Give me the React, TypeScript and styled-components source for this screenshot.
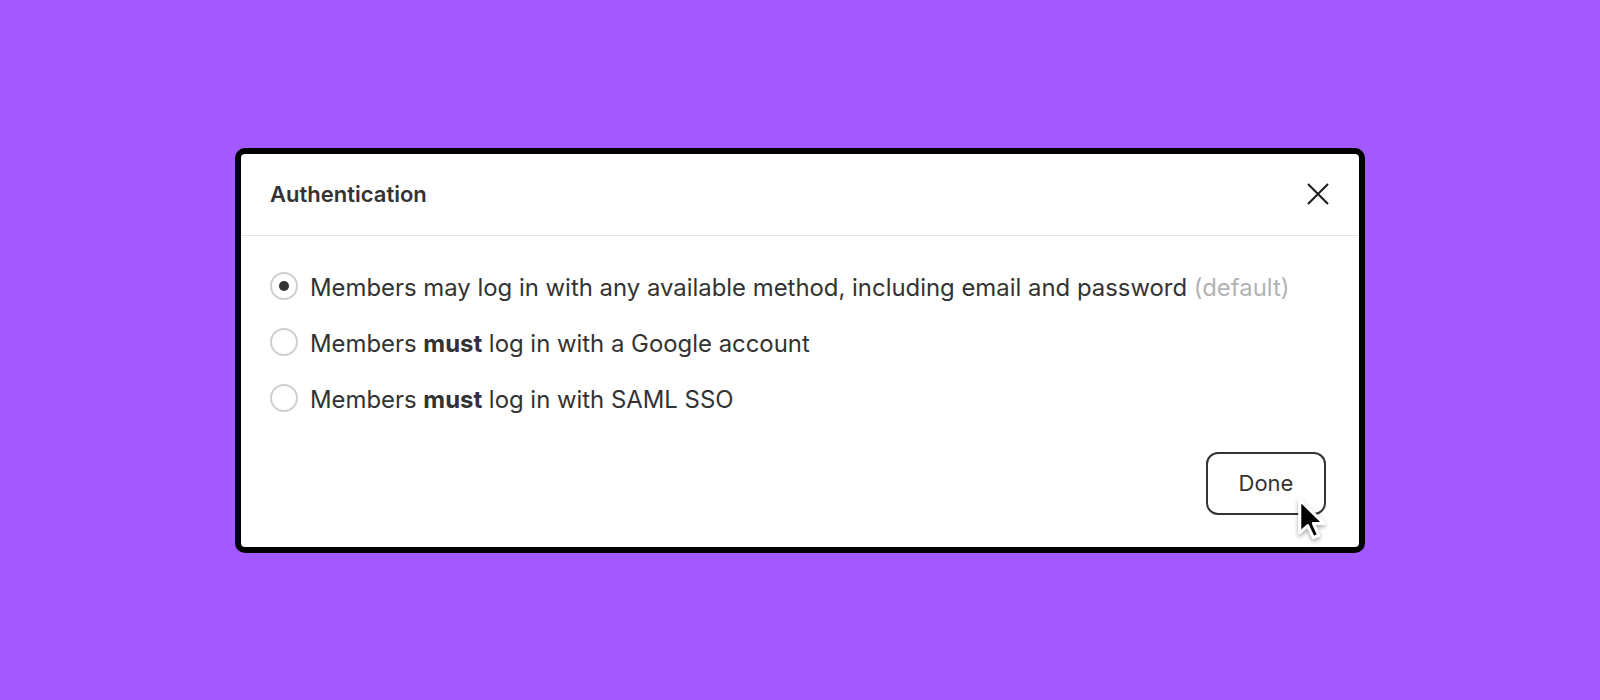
import React, { useState } from 'react'
import styled, { createGlobalStyle } from 'styled-components'

const GlobalStyle = createGlobalStyle`
  html, body {
    margin: 0;
    padding: 0;
    background: #a259ff;
    font-family: Inter, 'Noto Sans', 'Liberation Sans', sans-serif;
    -webkit-font-smoothing: antialiased;
  }
`

const Page = styled.div`
  width: 100vw;
  height: 100vh;
  display: flex;
  align-items: center;
  justify-content: center;
`

const Dialog = styled.div`
  width: 1130px;
  box-sizing: border-box;
  background: #fff;
  border: 6px solid #000;
  border-radius: 10px;
  display: flex;
  flex-direction: column;
`

const Header = styled.div`
  height: 82px;
  box-sizing: border-box;
  padding: 0 30px 0 29px;
  display: flex;
  align-items: center;
  justify-content: space-between;
  border-bottom: 1px solid #e3e3e3;
`

const Title = styled.h2`
  margin: 0;
  font-size: 22px;
  font-weight: 600;
  color: #333;
`

const CloseButton = styled.button`
  border: none;
  background: none;
  padding: 0;
  width: 22px;
  height: 22px;
  display: flex;
  cursor: pointer;
`

const Options = styled.div`
  padding: 36px 29px 0;
  display: flex;
  flex-direction: column;
  gap: 28px;
`

const Option = styled.label`
  height: 28px;
  display: flex;
  align-items: center;
  gap: 12px;
  font-size: 23.9px;
  color: #333;
  cursor: pointer;
`

const Radio = styled.span<{ $checked: boolean }>`
  width: 28px;
  height: 28px;
  box-sizing: border-box;
  border-radius: 50%;
  border: 2px solid #d0d0d0;
  background: #fff;
  flex-shrink: 0;
  display: flex;
  align-items: center;
  justify-content: center;
  &::after {
    content: '';
    width: 10px;
    height: 10px;
    border-radius: 50%;
    background: #333;
    display: ${(p) => (p.$checked ? 'block' : 'none')};
  }
`

const Label = styled.span`
  padding-top: 3px;
  b {
    font-weight: 700;
  }
`

const Hint = styled.span`
  color: #b3b3b3;
`

const Footer = styled.div`
  padding: 40px 33px 32px;
  display: flex;
  justify-content: flex-end;
`

const DoneButton = styled.button`
  position: relative;
  width: 120px;
  height: 63px;
  box-sizing: border-box;
  border: 2px solid #333;
  border-radius: 12px;
  background: #fff;
  font-family: inherit;
  font-size: 22px;
  color: #333;
  padding: 0;
  cursor: pointer;
`

const Pointer = styled.svg`
  position: absolute;
  left: 90px;
  top: 44px;
  width: 26px;
  height: 42px;
  overflow: visible;
  filter: drop-shadow(0 2px 2px rgba(0, 0, 0, 0.35));
`

const options = [
  {
    id: 'any',
    label: (
      <>
        Members may log in with any available method, including email and
        password <Hint>(default)</Hint>
      </>
    ),
  },
  {
    id: 'google',
    label: (
      <>
        Members <b>must</b> log in with a Google account
      </>
    ),
  },
  {
    id: 'saml',
    label: (
      <>
        Members <b>must</b> log in with SAML SSO
      </>
    ),
  },
]

const App: React.FC = () => {
  const [selected, setSelected] = useState<string>('any')

  return (
    <>
      <GlobalStyle />
      <Page>
        <Dialog>
          <Header>
            <Title>Authentication</Title>
            <CloseButton aria-label="Close">
              <svg width="22" height="22" viewBox="0 0 22 22">
                <path
                  d="M1 1 L21 21 M21 1 L1 21"
                  stroke="#1a1a1a"
                  strokeWidth="2"
                  fill="none"
                />
              </svg>
            </CloseButton>
          </Header>
          <Options>
            {options.map((o) => (
              <Option key={o.id} onClick={() => setSelected(o.id)}>
                <Radio $checked={selected === o.id} />
                <Label>{o.label}</Label>
              </Option>
            ))}
          </Options>
          <Footer>
            <DoneButton>
              Done
              {/* mouse pointer hovering the button */}
              <Pointer viewBox="0 0 15 24">
                <path
                  d="M1 1 L1 20 L5.6 15.8 L8.8 22.8 L12 21.4 L8.9 14.6 L15 14.6 Z"
                  fill="#000"
                  stroke="#fff"
                  strokeWidth="1.8"
                  strokeLinejoin="round"
                />
              </Pointer>
            </DoneButton>
          </Footer>
        </Dialog>
      </Page>
    </>
  )
}

export default App
